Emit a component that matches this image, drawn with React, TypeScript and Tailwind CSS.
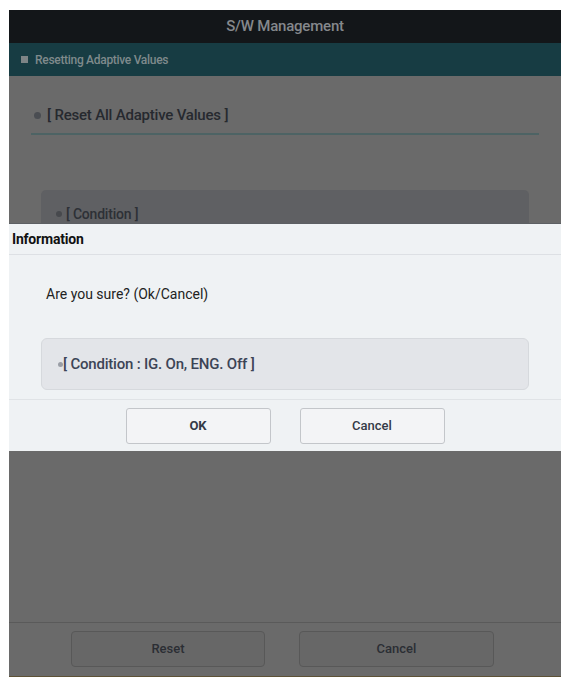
import React from "react";

const font = { fontFamily: "Roboto, 'Noto Sans', 'Liberation Sans', sans-serif" };

export default function App() {
  return (
    <div className="w-[571px] h-[687px] bg-white pt-[10px] pl-[9px]" style={font}>
      <div className="relative w-[552px] h-[667px] flex flex-col bg-[#6a6a6a] border-b border-[#5e5236]">
        {/* header */}
        <div className="h-[33px] bg-[#131619] flex items-center justify-center">
          <span className="text-[15px] font-medium text-[#85888c] tracking-[-0.2px]">S/W Management</span>
        </div>
        <div className="h-[33px] bg-[#173c43] flex items-center pl-[12px] gap-[7px]">
          <span className="w-[7px] h-[7px] bg-[#7d8486]" />
          <span className="text-[12px] font-medium text-[#7f8a8c] tracking-[-0.3px]">Resetting Adaptive Values</span>
        </div>

        {/* page body (dimmed) */}
        <div className="flex-1 flex flex-col">
          <div className="mx-[22px] mt-[28px] pb-[6px] border-b-2 border-[#4d6364] flex items-center gap-[6px] pl-[3px]">
            <span className="w-[7px] h-[7px] rounded-full bg-[#4a4d52]" />
            <span className="text-[15px] font-medium text-[#26292f] tracking-[-0.2px]">[ Reset All Adaptive Values ]</span>
          </div>
          <div className="mx-[32px] mt-[55px] h-[80px] rounded-[5px] bg-[#5f6063] pl-[15px] pt-[14px] flex items-start gap-[4px]">
            <span className="w-[6px] h-[6px] mt-[7px] rounded-full bg-[#47494d]" />
            <span className="text-[14px] font-medium text-[#2d3036] tracking-[-0.2px]">[ Condition ]</span>
          </div>
        </div>

        {/* bottom bar */}
        <div className="h-[54px] border-t border-[#5a5a5a] flex items-start justify-center gap-[34px] pt-[8px] pr-[5px]">
          <button className="w-[194px] h-[36px] rounded-[4px] border border-[#585858] bg-[#676767] text-[13px] font-medium text-[#2b2e34]">
            Reset
          </button>
          <button className="w-[195px] h-[36px] rounded-[4px] border border-[#585858] bg-[#676767] text-[13px] font-medium text-[#2b2e34]">
            Cancel
          </button>
        </div>

        {/* dialog */}
        <div className="absolute left-0 right-0 top-[213px] h-[228px] bg-[#eff2f4] border-t border-[#5c5f63] flex flex-col">
          <div className="h-[31px] flex items-center pl-[3px] border-b border-[#dde0e4]">
            <span className="text-[14px] font-bold text-[#111] tracking-[-0.2px]">Information</span>
          </div>
          <div className="pl-[37px] pt-[29px] text-[14px] text-[#222]">Are you sure? (Ok/Cancel)</div>
          <div className="mx-[32px] mt-[33px] h-[52px] rounded-[6px] bg-[#e3e5e9] border border-[#d6d9dd] flex items-center pl-[16px]">
            <span className="w-[5px] h-[5px] rounded-full bg-[#9a9ea6]" />
            <span className="text-[15px] font-medium text-[#3c4456] tracking-[-0.2px]">[ Condition : IG. On, ENG. Off ]</span>
          </div>
          <div className="mt-[9px] border-t border-[#e0e3e6] flex justify-center gap-[29px] pt-[8px]">
            <button className="w-[145px] h-[36px] rounded-[3px] border border-[#c3c6ca] bg-[#f3f4f6] text-[13px] font-bold text-[#333a47]">
              OK
            </button>
            <button className="w-[145px] h-[36px] rounded-[3px] border border-[#c3c6ca] bg-[#f3f4f6] text-[13px] font-medium text-[#333a47]">
              Cancel
            </button>
          </div>
        </div>
      </div>
    </div>
  );
}
